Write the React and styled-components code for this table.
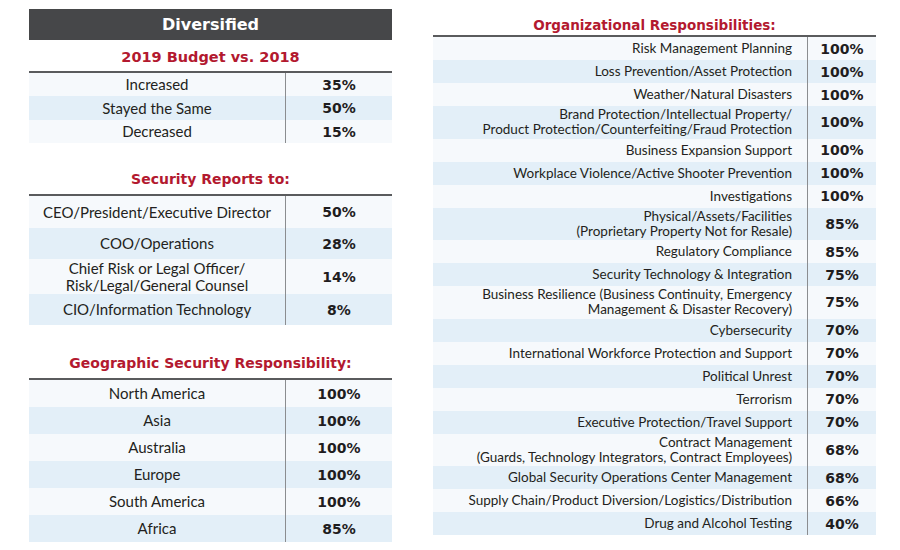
import styled, { createGlobalStyle } from "styled-components";

const GlobalStyle = createGlobalStyle`
  body {
    margin: 0;
    background: #ffffff;
    font-family: "Lato", "Liberation Sans", sans-serif;
    color: #231f20;
  }
`;

const budget = [
  ["Increased", "35%"],
  ["Stayed the Same", "50%"],
  ["Decreased", "15%"],
];

const reportsTo = [
  [["CEO/President/Executive Director"], "50%", 32],
  [["COO/Operations"], "28%", 31],
  [["Chief Risk or Legal Officer/", "Risk/Legal/General Counsel"], "14%", 35],
  [["CIO/Information Technology"], "8%", 31],
];

const geographic = [
  ["North America", "100%"],
  ["Asia", "100%"],
  ["Australia", "100%"],
  ["Europe", "100%"],
  ["South America", "100%"],
  ["Africa", "85%"],
];

const organizational = [
  [["Risk Management Planning"], "100%"],
  [["Loss Prevention/Asset Protection"], "100%"],
  [["Weather/Natural Disasters"], "100%"],
  [["Brand Protection/Intellectual Property/", "Product Protection/Counterfeiting/Fraud Protection"], "100%"],
  [["Business Expansion Support"], "100%"],
  [["Workplace Violence/Active Shooter Prevention"], "100%"],
  [["Investigations"], "100%"],
  [["Physical/Assets/Facilities", "(Proprietary Property Not for Resale)"], "85%"],
  [["Regulatory Compliance"], "85%"],
  [["Security Technology & Integration"], "75%"],
  [["Business Resilience (Business Continuity, Emergency", "Management & Disaster Recovery)"], "75%"],
  [["Cybersecurity"], "70%"],
  [["International Workforce Protection and Support"], "70%"],
  [["Political Unrest"], "70%"],
  [["Terrorism"], "70%"],
  [["Executive Protection/Travel Support"], "70%"],
  [["Contract Management", "(Guards, Technology Integrators, Contract Employees)"], "68%"],
  [["Global Security Operations Center Management"], "68%"],
  [["Supply Chain/Product Diversion/Logistics/Distribution"], "66%"],
  [["Drug and Alcohol Testing"], "40%"],
];

const Page = styled.div`
  display: flex;
  align-items: flex-start;
  width: 900px;
  height: 550px;
  overflow: hidden;
`;

const LeftColumn = styled.div`
  display: flex;
  flex-direction: column;
  width: 363px;
  margin-left: 29px;
  margin-top: 9px;
`;

const RightColumn = styled.div`
  display: flex;
  flex-direction: column;
  width: 443px;
  margin-left: 41px;
`;

const Banner = styled.div`
  height: 31px;
  background: #464749;
  color: #ffffff;
  font-family: "DejaVu Sans", sans-serif;
  font-weight: 700;
  font-size: 16px;
  display: flex;
  align-items: center;
  justify-content: center;
`;

const Section = styled.div`
  display: flex;
  flex-direction: column;
  margin-top: ${(p) => p.$top || 0}px;
`;

const Title = styled.div`
  height: ${(p) => p.$h || 30}px;
  display: flex;
  align-items: center;
  justify-content: center;
  color: #b3192f;
  font-family: "DejaVu Sans", sans-serif;
  font-weight: 700;
  font-size: ${(p) => p.$size || 14}px;
  padding-top: ${(p) => p.$pad || 0}px;
  box-sizing: border-box;
`;

const Table = styled.div`
  display: flex;
  flex-direction: column;
  border-top: 2px solid #5a5b5d;
`;

const Row = styled.div`
  display: grid;
  grid-template-columns: ${(p) => p.$cols};
  height: ${(p) => p.$h}px;
  background: ${(p) => (p.$alt ? "#e3eff8" : "#f6f9fc")};
`;

const Label = styled.div`
  display: flex;
  flex-direction: column;
  justify-content: center;
  align-items: ${(p) => (p.$right ? "flex-end" : "center")};
  text-align: ${(p) => (p.$right ? "right" : "center")};
  padding-right: ${(p) => (p.$right ? 15 : 0)}px;
  font-size: ${(p) => p.$size}px;
  line-height: ${(p) => p.$size + 1.5}px;
  border-right: 1px solid #8b8d90;
  white-space: nowrap;
`;

const Value = styled.div`
  display: flex;
  align-items: center;
  justify-content: center;
  font-family: "DejaVu Sans", sans-serif;
  font-weight: 700;
  font-size: 14px;
  color: #1f1d1e;
`;

const LEFT_COLS = "257px 106px";
const RIGHT_COLS = "375px 68px";

function App() {
  return (
    <>
      <GlobalStyle />
      <Page>
        <LeftColumn>
          <Banner>Diversified</Banner>
          <Section>
            <Title $h={31} $pad={2} $size={14.5}>2019 Budget vs. 2018</Title>
            <Table>
              {budget.map(([label, value], i) => (
                <Row key={label} $cols={LEFT_COLS} $h={i === 1 ? 24 : 23} $alt={i % 2 === 1}>
                  <Label $size={15}>{label}</Label>
                  <Value>{value}</Value>
                </Row>
              ))}
            </Table>
          </Section>
          <Section $top={21}>
            <Title $h={30}>Security Reports to:</Title>
            <Table>
              {reportsTo.map(([lines, value, h], i) => (
                <Row key={lines[0]} $cols={LEFT_COLS} $h={h} $alt={i % 2 === 1}>
                  <Label $size={15}>
                    {lines.map((l) => (
                      <span key={l}>{l}</span>
                    ))}
                  </Label>
                  <Value>{value}</Value>
                </Row>
              ))}
            </Table>
          </Section>
          <Section $top={23}>
            <Title $h={30}>Geographic Security Responsibility:</Title>
            <Table>
              {geographic.map(([label, value], i) => (
                <Row key={label} $cols={LEFT_COLS} $h={27} $alt={i % 2 === 1}>
                  <Label $size={15}>{label}</Label>
                  <Value>{value}</Value>
                </Row>
              ))}
            </Table>
          </Section>
        </LeftColumn>
        <RightColumn>
          <Section $top={11}>
            <Title $h={24} $pad={3} $size={13.5}>Organizational Responsibilities:</Title>
            <Table>
              {organizational.map(([lines, value], i) => (
                <Row
                  key={lines[0]}
                  $cols={RIGHT_COLS}
                  $h={lines.length > 1 ? 32.5 : 23}
                  $alt={i % 2 === 1}
                >
                  <Label $right $size={13.5}>
                    {lines.map((l) => (
                      <span key={l}>{l}</span>
                    ))}
                  </Label>
                  <Value>{value}</Value>
                </Row>
              ))}
            </Table>
          </Section>
        </RightColumn>
      </Page>
    </>
  );
}

export default App;
